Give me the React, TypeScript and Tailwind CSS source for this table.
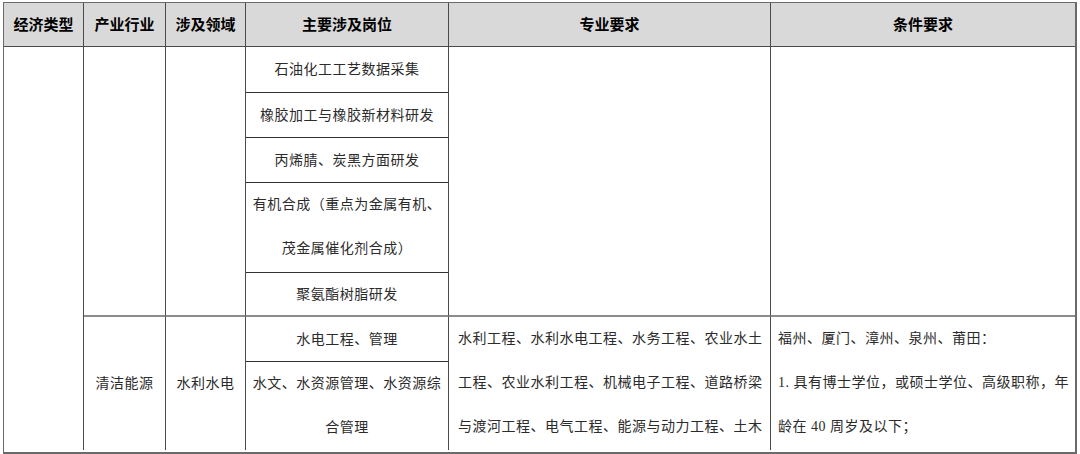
import React from "react";

const bodyFont = {
  fontFamily: '"Liberation Serif", "Noto Sans CJK SC", serif',
};

function Lines({ lines, align = "center", lead = "leading-[44px]" }: { lines: string[]; align?: "center" | "left"; lead?: string }) {
  return (
    <div className={`${lead} ${align === "center" ? "text-center" : "text-left"}`}>
      {lines.map((l, i) => (
        <div key={i} className="whitespace-nowrap">
          {l}
        </div>
      ))}
    </div>
  );
}

export default function App() {
  const head =
    "flex items-center justify-center bg-[#d9d9d9] border-b border-[#4a4a4a] text-[15px] font-bold text-black [font-family:'Noto_Sans_CJK_SC',sans-serif]";
  const vline = "border-r border-[#4a4a4a]";
  const body = "text-[14px] tracking-[0.5px] text-[#2b2b2b]";
  return (
    <div className="w-[1080px] h-[454px] bg-white overflow-hidden pt-[2px] pl-[3px]">
      <div
        className="grid w-[1074px] h-[452px] overflow-hidden border-t border-l border-r-2 border-b-2 border-[#6a6a6a] grid-cols-[80px_82px_80px_203px_322px_304px] grid-rows-[44px_46px_45px_45px_90px_44px_45px_88px]"
        style={bodyFont}
      >
        {/* Header */}
        <div className={`${head} ${vline} col-start-1 row-start-1`}>经济类型</div>
        <div className={`${head} ${vline} col-start-2 row-start-1`}>产业行业</div>
        <div className={`${head} ${vline} col-start-3 row-start-1`}>涉及领域</div>
        <div className={`${head} ${vline} col-start-4 row-start-1`}>主要涉及岗位</div>
        <div className={`${head} ${vline} col-start-5 row-start-1`}>专业要求</div>
        <div className={`${head} col-start-6 row-start-1`}>条件要求</div>

        {/* Column 1 */}
        <div className={`${vline} col-start-1 row-start-2 row-span-7`} />

        {/* Column 2 */}
        <div className={`${vline} border-b-2 border-b-[#8c8c8c] col-start-2 row-start-2 row-span-5`} />
        <div className={`${vline} ${body} flex items-center justify-center col-start-2 row-start-7 row-span-2`}>
          清洁能源
        </div>

        {/* Column 3 */}
        <div className={`${vline} border-b-2 border-b-[#8c8c8c] col-start-3 row-start-2 row-span-5`} />
        <div className={`${vline} ${body} flex items-center justify-center col-start-3 row-start-7 row-span-2`}>
          水利水电
        </div>

        {/* Column 4 */}
        <div className={`${vline} ${body} border-b border-b-[#333] flex items-center justify-center col-start-4 row-start-2`}>
          石油化工工艺数据采集
        </div>
        <div className={`${vline} ${body} border-b border-b-[#333] flex items-center justify-center col-start-4 row-start-3`}>
          橡胶加工与橡胶新材料研发
        </div>
        <div className={`${vline} ${body} border-b border-b-[#333] flex items-center justify-center col-start-4 row-start-4`}>
          丙烯腈、炭黑方面研发
        </div>
        <div className={`${vline} ${body} border-b border-b-[#333] flex items-start justify-center col-start-4 row-start-5`}>
          <Lines lines={["有机合成（重点为金属有机、", "茂金属催化剂合成）"]} />
        </div>
        <div className={`${vline} ${body} border-b-2 border-b-[#8c8c8c] flex items-center justify-center col-start-4 row-start-6`}>
          聚氨酯树脂研发
        </div>
        <div className={`${vline} ${body} border-b border-b-[#333] flex items-center justify-center col-start-4 row-start-7`}>
          水电工程、管理
        </div>
        <div className={`${vline} ${body} flex items-start justify-center col-start-4 row-start-8`}>
          <Lines lines={["水文、水资源管理、水资源综", "合管理"]} />
        </div>

        {/* Column 5 */}
        <div className={`${vline} border-b-2 border-b-[#8c8c8c] col-start-5 row-start-2 row-span-5`} />
        <div className={`${vline} ${body} pl-[9px] col-start-5 row-start-7 row-span-2`}>
          <Lines
            align="left"
            lines={[
              "水利工程、水利水电工程、水务工程、农业水土",
              "工程、农业水利工程、机械电子工程、道路桥梁",
              "与渡河工程、电气工程、能源与动力工程、土木",
            ]}
          />
        </div>

        {/* Column 6 */}
        <div className="border-b-2 border-b-[#8c8c8c] col-start-6 row-start-2 row-span-5" />
        <div className={`${body} pl-[7px] col-start-6 row-start-7 row-span-2`}>
          <Lines
            align="left"
            lines={["福州、厦门、漳州、泉州、莆田：", "1. 具有博士学位，或硕士学位、高级职称，年", "龄在 40 周岁及以下；"]}
          />
        </div>
      </div>
    </div>
  );
}
